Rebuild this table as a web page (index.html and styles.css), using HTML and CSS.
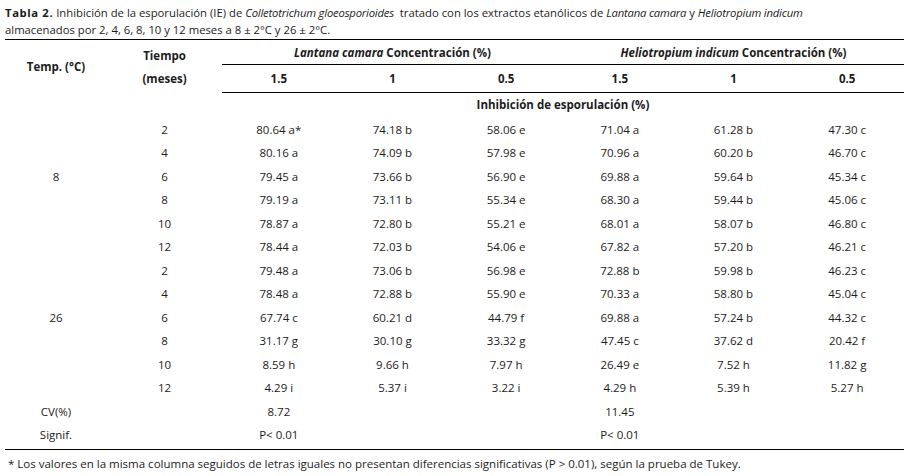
FILE: index.html
```html
<!DOCTYPE html>
<html lang="es">
<head>
<meta charset="utf-8">
<link rel="stylesheet" href="styles.css">
</head>
<body>
<div class="page">
  <p class="caption"><b>Tabla 2.</b> Inhibición de la esporulación (IE) de <i>Colletotrichum gloeosporioides</i> &nbsp;tratado con los extractos etanólicos de <i>Lantana camara</i> y <i>Heliotropium indicum</i><br>almacenados por 2, 4, 6, 8, 10 y 12 meses a 8 ± 2°C y 26 ± 2°C.</p>
  <table class="data">
    <colgroup>
      <col class="c-temp"><col class="c-time">
      <col class="c-val"><col class="c-val"><col class="c-val">
      <col class="c-val"><col class="c-val"><col class="c-val">
    </colgroup>
    <thead>
      <tr class="h1">
        <th rowspan="2" class="top">Temp. (°C)</th>
        <th rowspan="2" class="top tiempo">Tiempo<br>(meses)</th>
        <th colspan="3" class="top group"><i>Lantana camara</i> Concentración (%)</th>
        <th colspan="3" class="top group"><i>Heliotropium indicum</i> Concentración (%)</th>
      </tr>
      <tr class="h2">
        <th>1.5</th><th>1</th><th>0.5</th><th>1.5</th><th>1</th><th>0.5</th>
      </tr>
    </thead>
    <tbody>
      <tr class="sub"><td></td><td></td><th colspan="6">Inhibición de esporulación (%)</th></tr>
      <tr class="tall"><td></td><td>2</td><td>80.64 a*</td><td>74.18 b</td><td>58.06 e</td><td>71.04 a</td><td>61.28 b</td><td>47.30 c</td></tr>
      <tr class="short"><td></td><td>4</td><td>80.16 a</td><td>74.09 b</td><td>57.98 e</td><td>70.96 a</td><td>60.20 b</td><td>46.70 c</td></tr>
      <tr class="tall"><td>8</td><td>6</td><td>79.45 a</td><td>73.66 b</td><td>56.90 e</td><td>69.88 a</td><td>59.64 b</td><td>45.34 c</td></tr>
      <tr class="short"><td></td><td>8</td><td>79.19 a</td><td>73.11 b</td><td>55.34 e</td><td>68.30 a</td><td>59.44 b</td><td>45.06 c</td></tr>
      <tr class="tall"><td></td><td>10</td><td>78.87 a</td><td>72.80 b</td><td>55.21 e</td><td>68.01 a</td><td>58.07 b</td><td>46.80 c</td></tr>
      <tr class="short"><td></td><td>12</td><td>78.44 a</td><td>72.03 b</td><td>54.06 e</td><td>67.82 a</td><td>57.20 b</td><td>46.21 c</td></tr>
      <tr class="tall"><td></td><td>2</td><td>79.48 a</td><td>73.06 b</td><td>56.98 e</td><td>72.88 b</td><td>59.98 b</td><td>46.23 c</td></tr>
      <tr class="short"><td></td><td>4</td><td>78.48 a</td><td>72.88 b</td><td>55.90 e</td><td>70.33 a</td><td>58.80 b</td><td>45.04 c</td></tr>
      <tr class="tall"><td>26</td><td>6</td><td>67.74 c</td><td>60.21 d</td><td>44.79 f</td><td>69.88 a</td><td>57.24 b</td><td>44.32 c</td></tr>
      <tr class="short"><td></td><td>8</td><td>31.17 g</td><td>30.10 g</td><td>33.32 g</td><td>47.45 c</td><td>37.62 d</td><td>20.42 f</td></tr>
      <tr class="tall"><td></td><td>10</td><td>8.59 h</td><td>9.66 h</td><td>7.97 h</td><td>26.49 e</td><td>7.52 h</td><td>11.82 g</td></tr>
      <tr class="short"><td></td><td>12</td><td>4.29 i</td><td>5.37 i</td><td>3.22 i</td><td>4.29 h</td><td>5.39 h</td><td>5.27 h</td></tr>
      <tr class="tall"><td>CV(%)</td><td></td><td>8.72</td><td></td><td></td><td>11.45</td><td></td><td></td></tr>
      <tr class="last"><td>Signif.</td><td></td><td>P&lt; 0.01</td><td></td><td></td><td>P&lt; 0.01</td><td></td><td></td></tr>
    </tbody>
  </table>
  <p class="note">* Los valores en la misma columna seguidos de letras iguales no presentan diferencias significativas (P &gt; 0.01), según la prueba de Tukey.</p>
</div>
</body>
</html>
```

FILE: styles.css
```css
html, body {
  margin: 0;
  padding: 0;
  background: #ffffff;
}

.page {
  padding: 4px 5px 0 5px;
  font-family: "Open Sans", "DejaVu Sans", sans-serif;
  font-size: 11.5px;
  color: #1c1c1c;
}

.caption {
  margin: 0 0 1px 0;
  font-size: 11.3px;
  line-height: 17px;
}

.caption b {
  font-weight: 700;
  letter-spacing: 0.6px;
}

.caption i {
  letter-spacing: -0.2px;
}

.data {
  width: 899px;
  border-collapse: separate;
  border-spacing: 0;
  table-layout: fixed;
}

.c-temp { width: 102px; }
.c-time { width: 115px; }
.c-val { width: 113.67px; }

.data th,
.data td {
  padding: 0;
  text-align: center;
  vertical-align: middle;
  white-space: nowrap;
}

.data th {
  font-weight: 700;
}

.data .h1 {
  height: 26px;
}

.data th.top {
  border-top: 1px solid #000000;
}

.data .h1 .group {
  border-bottom: 1px solid #000000;
}

.data .tiempo {
  line-height: 23px;
}

.data .h2 {
  height: 28px;
}

.data .h2 th {
  border-bottom: 1px solid #000000;
}

.data .sub {
  height: 24px;
}

.data .sub th {
  padding-bottom: 2px;
}

.data tr.tall {
  height: 24px;
}

.data tr.short {
  height: 23px;
}

.data tr.last {
  height: 27px;
}

.data tr.last td {
  padding-bottom: 3px;
  border-bottom: 1px solid #000000;
}

.note {
  margin: 5px 0 0 3px;
  line-height: 17px;
}
```
